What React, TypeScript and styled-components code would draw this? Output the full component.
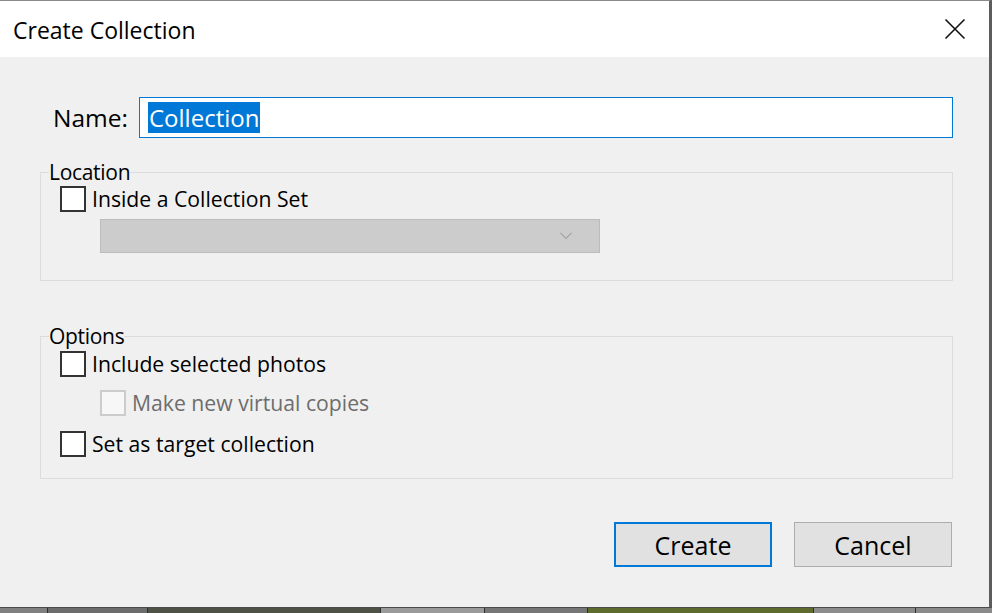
import React from "react";
import styled, { createGlobalStyle } from "styled-components";

const Global = createGlobalStyle`
  html, body { margin: 0; padding: 0; background: #6f6f6f; }
  body { font-family: "Open Sans", "Noto Sans", sans-serif; }
  #root { width: 992px; height: 613px; overflow: hidden; }
`;

const Screen = styled.div`
  width: 992px;
  height: 613px;
  display: flex;
  flex-direction: column;
`;

const Dialog = styled.div`
  width: 989px;
  height: 606px;
  border-top: 1px solid #8a8a8a;
  border-right: 3px solid #5c5c5c;
  border-bottom: 1px solid #4a4a4a;
  background: #f0f0f0;
  display: flex;
  flex-direction: column;
  color: #000;
`;

const TitleBar = styled.div`
  height: 56px;
  background: #ffffff;
  display: flex;
  align-items: center;
  justify-content: space-between;
  padding-left: 13px;
  padding-right: 22px;
  flex-shrink: 0;
`;

const Title = styled.div`
  font-size: 23px;
  margin-top: 1px;
`;

const CloseBtn = styled.div`
  width: 24px;
  height: 24px;
  display: flex;
  align-items: center;
  justify-content: center;
`;

const Body = styled.div`
  flex: 1;
  display: flex;
  flex-direction: column;
  padding: 40px 36px 0 40px;
`;

const NameRow = styled.div`
  display: flex;
  align-items: center;
  justify-content: flex-end;
  gap: 11px;
`;

const NameLabel = styled.label`
  font-size: 24.5px;
`;

const NameInput = styled.div`
  width: 814px;
  height: 41px;
  box-sizing: border-box;
  border: 1px solid #0078d7;
  background: #fff;
  display: flex;
  align-items: center;
  padding-left: 8px;
`;

const Selected = styled.span`
  background: #0078d7;
  color: #fff;
  font-size: 24px;
  line-height: 31px;
  padding: 0 1px;
  margin-top: -1px;
`;

const Group = styled.fieldset<{ $top: number; $pt: number; $pb: number }>`
  margin: ${(p) => p.$top}px 0 0 0;
  border: 1px solid #dcdcdc;
  padding: ${(p) => p.$pt}px 0 ${(p) => p.$pb}px 19px;
  min-width: 0;
  display: flex;
  flex-direction: column;
  align-items: flex-start;
`;

const Legend = styled.legend`
  font-size: 21px;
  line-height: 20px;
  height: 20px;
  padding: 0;
  margin-left: -11px;
  letter-spacing: -0.3px;
`;

const CheckRow = styled.div<{ $indent?: number; $mt?: number; $disabled?: boolean }>`
  display: flex;
  align-items: center;
  gap: 6px;
  height: 26px;
  margin-left: ${(p) => p.$indent ?? 0}px;
  margin-top: ${(p) => p.$mt ?? 0}px;
  color: ${(p) => (p.$disabled ? "#6d6d6d" : "#000")};
`;

const Box = styled.span<{ $disabled?: boolean }>`
  width: 26px;
  height: 26px;
  box-sizing: border-box;
  border: 2px solid ${(p) => (p.$disabled ? "#cccccc" : "#333333")};
  background: ${(p) => (p.$disabled ? "#f7f7f7" : "#ffffff")};
  flex-shrink: 0;
`;

const CheckText = styled.span`
  font-size: 21.2px;
  line-height: 26px;
`;

const Select = styled.div`
  margin: 7px 0 0 40px;
  width: 500px;
  height: 34px;
  box-sizing: border-box;
  background: #cccccc;
  border: 1px solid #bcbcbc;
  display: flex;
  align-items: center;
  justify-content: flex-end;
  padding-right: 27px;
`;

const Buttons = styled.div`
  display: flex;
  justify-content: flex-end;
  gap: 22px;
  margin-top: 43px;
  padding-right: 1px;
`;

const Button = styled.button<{ $primary?: boolean }>`
  width: 158px;
  height: 45px;
  box-sizing: border-box;
  background: #e1e1e1;
  border: ${(p) => (p.$primary ? "2px solid #0078d7" : "1px solid #adadad")};
  font-family: "Open Sans", "Noto Sans", sans-serif;
  font-size: 25px;
  color: #000;
  padding: 0;
  margin: 0;
`;

const Strip = styled.div`
  flex: 1;
  display: flex;
  background: #6f6f6f;
`;

const Thumb = styled.div<{ $w: number; $c: string }>`
  width: ${(p) => p.$w}px;
  background: ${(p) => p.$c};
  border-right: 1px solid #2e2e2e;
  flex-shrink: 0;
`;

const thumbs = [
  { w: 47, c: "#808080" },
  { w: 99, c: "#6c6c6c" },
  { w: 232, c: "#4e5246" },
  { w: 103, c: "#9a9a9a" },
  { w: 102, c: "#767676" },
  { w: 225, c: "#5d6b2c" },
  { w: 101, c: "#8c8c8c" },
  { w: 83, c: "#8a8a8a" },
];

export default function App() {
  return (
    <Screen>
      <Global />
      <Dialog>
        <TitleBar>
          <Title>Create Collection</Title>
          <CloseBtn>
            <svg width="22" height="22" viewBox="0 0 22 22">
              <path d="M1.5 1.5 L20.5 20.5 M20.5 1.5 L1.5 20.5" stroke="#111" strokeWidth="1.6" fill="none" />
            </svg>
          </CloseBtn>
        </TitleBar>
        <Body>
          <NameRow>
            <NameLabel>Name:</NameLabel>
            <NameInput>
              <Selected>Collection</Selected>
            </NameInput>
          </NameRow>

          <Group $top={24} $pt={4} $pb={27}>
            <Legend>Location</Legend>
            <CheckRow>
              <Box />
              <CheckText>Inside a Collection Set</CheckText>
            </CheckRow>
            <Select>
              <svg width="12" height="8" viewBox="0 0 12 8">
                <path d="M0.5 0.8 L6 6.5 L11.5 0.8" stroke="#a3a3a3" strokeWidth="1.2" fill="none" />
              </svg>
            </Select>
          </Group>

          <Group $top={45} $pt={5} $pb={21}>
            <Legend>Options</Legend>
            <CheckRow>
              <Box />
              <CheckText>Include selected photos</CheckText>
            </CheckRow>
            <CheckRow $indent={40} $mt={13} $disabled>
              <Box $disabled />
              <CheckText>Make new virtual copies</CheckText>
            </CheckRow>
            <CheckRow $mt={15}>
              <Box />
              <CheckText>Set as target collection</CheckText>
            </CheckRow>
          </Group>

          <Buttons>
            <Button $primary>Create</Button>
            <Button>Cancel</Button>
          </Buttons>
        </Body>
      </Dialog>
      <Strip>
        {thumbs.map((t, i) => (
          <Thumb key={i} $w={t.w} $c={t.c} />
        ))}
      </Strip>
    </Screen>
  );
}
